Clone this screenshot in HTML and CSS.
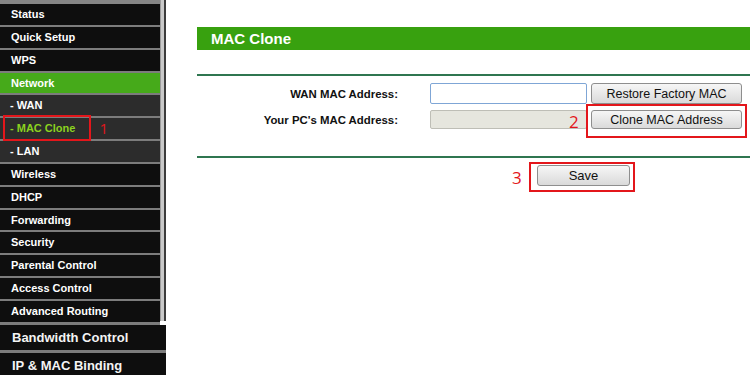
FILE: index.html
```html
<!DOCTYPE html>
<html>
<head>
<meta charset="UTF-8">
<title>MAC Clone</title>
<link rel="stylesheet" href="styles.css">
</head>
<body>
<div class="sidebar">
	<div class="menu-top">
		<ul class="menu">
			<li>Status</li>
			<li>Quick Setup</li>
			<li>WPS</li>
			<li class="active">Network</li>
			<li class="sub">- WAN</li>
			<li class="sub current"><span class="mark">- MAC Clone<span class="box"></span></span><span class="num num1">1</span></li>
			<li class="sub">- LAN</li>
			<li>Wireless</li>
			<li>DHCP</li>
			<li>Forwarding</li>
			<li>Security</li>
			<li>Parental Control</li>
			<li>Access Control</li>
			<li>Advanced Routing</li>
		</ul>
		<div class="scroll"></div>
	</div>
	<ul class="menu big">
		<li>Bandwidth Control</li>
		<li>IP &amp; MAC Binding</li>
	</ul>
</div>
<div class="main">
	<div class="title">MAC Clone</div>
	<hr class="line">
	<form class="form">
		<div class="row">
			<label>WAN MAC Address:</label>
			<input type="text" class="field">
			<button type="button" class="btn">Restore Factory MAC</button>
		</div>
		<div class="row">
			<label>Your PC's MAC Address:</label>
			<input type="text" class="field" disabled>
			<span class="mark">
				<span class="num num2">2</span>
				<button type="button" class="btn btn-short">Clone MAC Address</button>
				<span class="box box2"></span>
			</span>
		</div>
	</form>
	<hr class="line line2">
	<div class="save">
		<span class="mark">
			<span class="num num3">3</span>
			<button type="button" class="btn btn-save">Save</button>
			<span class="box box3"></span>
		</span>
	</div>
</div>
</body>
</html>
```

FILE: styles.css
```css
* {
	font-family: "Liberation Sans", Arial, sans-serif;
	box-sizing: border-box;
}

body {
	margin: 0;
	display: flex;
	background-color: #FFF;
	height: 375px;
	overflow: hidden;
}

ul {
	margin: 0;
	padding: 0;
	list-style-type: none;
}

/* left menu */
.sidebar {
	width: 166px;
	background-color: #FFF;
}
.menu-top {
	display: flex;
}
.menu {
	width: 160px;
	border-top: 4px solid #858585;
}
.menu li {
	height: 22.85px;
	line-height: 21px;
	padding-left: 11px;
	background-color: #0E0E0E;
	border-bottom: 2px solid #7C7C7C;
	color: #FFF;
	font-size: 11px;
	font-weight: bold;
}
.menu li:last-child {
	height: 24px;
	border-bottom-width: 3px;
}
.menu li.active {
	background-color: #46AA1A;
}
.menu li.sub {
	padding-left: 10px;
	background-color: #2C2C2C;
}
.menu li.current {
	color: #8BD21F;
	display: flex;
	align-items: center;
}
.scroll {
	width: 6px;
	height: 321px;
	background-color: #C9C9C9;
	border-left: 1px solid #9A9A9A;
	border-right: 2px solid #3C3C3C;
}
.menu.big {
	width: 166px;
	border-top: none;
}
.menu.big li {
	height: 28px;
	line-height: 25px;
	border-bottom-width: 3px;
	font-size: 13px;
	color: #F4F4F4;
	padding-left: 12px;
}

/* red annotation marks */
.mark {
	position: relative;
	display: inline-flex;
	align-items: center;
}
.box {
	position: absolute;
	border: 2px solid #E3161B;
	left: -7px;
	right: -16px;
	top: -3px;
	bottom: -2px;
}
.num {
	color: #E3161B;
	font-family: "Open Sans", "Liberation Sans", sans-serif;
	font-weight: normal;
}
.num1 {
	margin-left: 24px;
	font-size: 15px;
}

/* content */
.main {
	flex: 1;
	padding: 27px 0 0 31px;
}
.title {
	height: 23px;
	line-height: 23px;
	padding-left: 14px;
	background-color: #38A10F;
	color: #FFF;
	font-size: 15px;
	font-weight: bold;
}
.line {
	margin: 24px 0 0 0;
	border: none;
	border-top: 2px solid #2F7650;
	height: 0;
}
.line2 {
	margin-top: 26px;
}
.form {
	margin: 7px 0 0 0;
}
.row {
	display: flex;
	align-items: center;
	height: 21px;
	margin-bottom: 5px;
}
.row label {
	width: 201px;
	text-align: right;
	font-size: 11.4px;
	font-weight: bold;
	color: #111;
}
.field {
	margin-left: 32px;
	width: 157px;
	height: 21px;
	border: 1px solid #7FA6D6;
	border-radius: 2px;
	background-color: #FFF;
}
.field:disabled {
	height: 19px;
	border: 1px solid #BEBEB6;
	background-color: #E6E6DE;
}
.btn {
	margin-left: 4px;
	width: 151px;
	height: 21px;
	padding: 0;
	border: 1px solid #8E8E8E;
	border-radius: 3px;
	background: linear-gradient(#F6F6F6, #DADADA);
	color: #111;
	font-size: 12.5px;
}
.btn-short {
	height: 19px;
}
.num2 {
	position: absolute;
	left: -18px;
	top: 0;
	font-size: 17px;
}
.box2 {
	left: -1px;
	right: -5px;
	top: -6px;
	bottom: -9px;
}
.save {
	padding: 7px 0 0 340px;
}
.btn-save {
	margin-left: 0;
	width: 93px;
	height: 21px;
	font-size: 13px;
}
.num3 {
	position: absolute;
	left: -25px;
	top: 1px;
	font-size: 17px;
}
.box3 {
	left: -8px;
	right: -5px;
	top: -3px;
	bottom: -6px;
}
```
